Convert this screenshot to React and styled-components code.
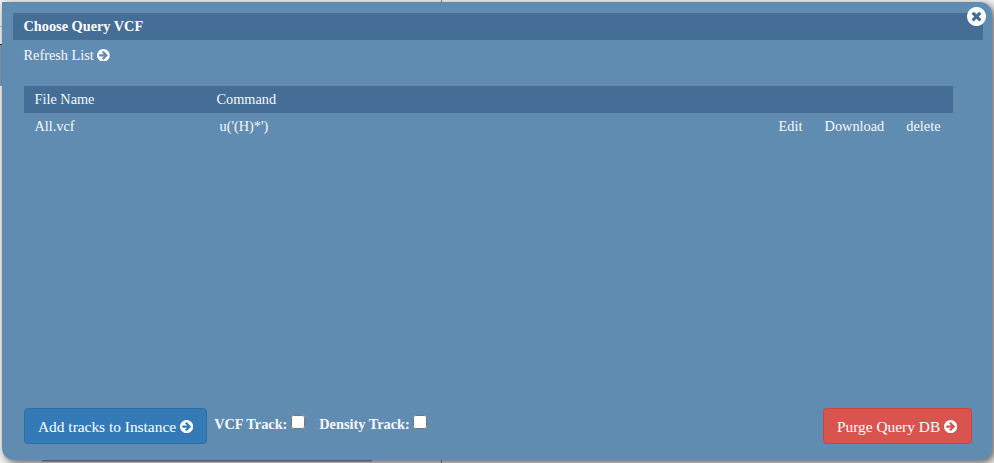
import React from "react";
import styled, { createGlobalStyle } from "styled-components";

const GlobalStyle = createGlobalStyle`
  *, *::before, *::after { box-sizing: border-box; }
  html, body, #root { height: 100%; margin: 0; }
  body {
    overflow: hidden;
    font-family: "Liberation Serif", "Times New Roman", serif;
    font-size: 14.3px;
    line-height: 20px;
    color: #f8f8f8;
  }
`;

const Page = styled.div`
  position: relative;
  height: 463px;
  padding: 2px;
  background: #f1f1f0;
  overflow: hidden;
`;

const Backdrop = styled.svg`
  position: absolute;
  inset: 0;
  display: block;
`;

const Dialog = styled.section`
  position: relative;
  display: flex;
  flex-direction: column;
  width: 990px;
  height: 458px;
  padding: 11px 9px 16px 11px;
  background: #608cb2;
  border-radius: 0 12px 12px 12px;
  box-shadow: 3px 3px 9px 0 rgba(0, 0, 0, 0.6);
`;

const TitleBar = styled.header`
  height: 27px;
  padding-left: 10.5px;
  line-height: 27px;
  font-weight: bold;
  color: #fff;
  background: #446e95;
`;

const CloseButton = styled.button`
  position: absolute;
  top: 5px;
  right: 6px;
  width: 19px;
  height: 19px;
  padding: 0;
  border: 0;
  background: none;
  color: #fff;
`;

const Icon = styled.svg`
  flex: none;
  display: block;
  width: ${(p) => p.$size}px;
  height: ${(p) => p.$size}px;
  fill: currentColor;
`;

const RefreshLink = styled.div`
  display: flex;
  align-items: center;
  gap: 3.5px;
  height: 30px;
  padding-left: 10.5px;
`;

const FileTable = styled.div`
  width: 929px;
  margin: 16px 0 0 11px;
`;

const FileRow = styled.div`
  display: grid;
  grid-template-columns: ${(p) => (p.$head ? "182px" : "185px")} 1fr auto;
  height: 27px;
  padding: 0 12.5px 0 10.5px;
  line-height: 27px;
  background: ${(p) => (p.$head ? "#446e95" : "transparent")};
`;

const RowActions = styled.div`
  display: flex;
  gap: 22.2px;
`;

const Footer = styled.footer`
  display: flex;
  align-items: center;
  height: 36px;
  margin: auto 11px 0;
`;

const ActionButton = styled.button`
  display: flex;
  align-items: center;
  gap: 4px;
  width: ${(p) => p.$width}px;
  height: 36px;
  margin-left: ${(p) => (p.$end ? "auto" : 0)};
  padding: 1px 0 0 13px;
  border: 1px solid ${(p) => (p.$danger ? "#d43f3a" : "#2e6da4")};
  border-radius: 4px;
  background: ${(p) => (p.$danger ? "#d9534f" : "#337ab7")};
  color: #fff;
  font: 15.4px/20px "Liberation Serif", serif;
  white-space: nowrap;
`;

const TrackOption = styled.label`
  display: flex;
  align-items: center;
  gap: 3.4px;
  margin: -4px 0 0 ${(p) => p.$gap}px;
  font-weight: bold;
`;

const Checkbox = styled.input`
  width: 14px;
  height: 14px;
  margin: -4px 0 0;
`;

const ring =
  "M1664 896q0 209-103 385.5t-279.5 279.5-385.5 103-385.5-103-279.5-279.5-103-385.5 103-385.5 279.5-279.5 385.5-103 385.5 103 279.5 279.5 103 385.5z";
const arrow =
  "M1413 896q0-27-18-45l-91-91-362-362q-18-18-45-18t-45 18l-91 91q-18 18-18 45t18 45l189 189h-502q-26 0-45 19t-19 45v128q0 26 19 45t45 19h502l-189 189q-19 19-19 45t19 45l91 91q18 18 45 18t45-18l362-362 91-91q18-18 18-45z";
const cross =
  "M1277 1122q0-26-19-45l-181-181 181-181q19-19 19-45 0-27-19-46l-90-90q-19-19-46-19-26 0-45 19l-181 181-181-181q-19-19-45-19-27 0-46 19l-90 90q-19 19-19 46 0 26 19 45l181 181-181 181q-19 19-19 45 0 27 19 46l90 90q19 19 46 19 26 0 45-19l181-181 181 181q19 19 45 19 27 0 46-19l90-90q19-19 19-46z";

function CircleIcon({ shape, size }) {
  return (
    <Icon $size={size} viewBox="128 128 1536 1536" aria-hidden="true">
      <path fillRule="evenodd" d={shape + ring} />
    </Icon>
  );
}

export default function App() {
  return (
    <>
      <GlobalStyle />
      <Page>
        <Backdrop width="994" height="463" aria-hidden="true">
          <path d="M0 26.5H3" stroke="#bbb" />
          <path d="M0 44H3V86H0Z" fill="#7c9bb8" />
          <path d="M0 44.5H3" stroke="#333" />
          <path d="M441.5 0V463" stroke="#888" />
          <path d="M42 460.5H372" stroke="#9c9cb8" strokeWidth="2" />
        </Backdrop>
        <Dialog>
          <TitleBar>Choose Query VCF</TitleBar>
          <CloseButton aria-label="Close">
            <CircleIcon shape={cross} size={19} />
          </CloseButton>
          <RefreshLink>
            Refresh List <CircleIcon shape={arrow} size={12.8} />
          </RefreshLink>
          <FileTable>
            <FileRow $head>
              <span>File Name</span>
              <span>Command</span>
            </FileRow>
            <FileRow>
              <span>All.vcf</span>
              <span>u('(H)*')</span>
              <RowActions>
                <span>Edit</span>
                <span>Download</span>
                <span>delete</span>
              </RowActions>
            </FileRow>
          </FileTable>
          <Footer>
            <ActionButton $width={183}>
              Add tracks to Instance <CircleIcon shape={arrow} size={13.2} />
            </ActionButton>
            <TrackOption $gap={7.2}>
              VCF Track: <Checkbox type="checkbox" />
            </TrackOption>
            <TrackOption $gap={14.5}>
              Density Track: <Checkbox type="checkbox" />
            </TrackOption>
            <ActionButton $danger $end $width={149}>
              Purge Query DB <CircleIcon shape={arrow} size={13.2} />
            </ActionButton>
          </Footer>
        </Dialog>
      </Page>
    </>
  );
}
